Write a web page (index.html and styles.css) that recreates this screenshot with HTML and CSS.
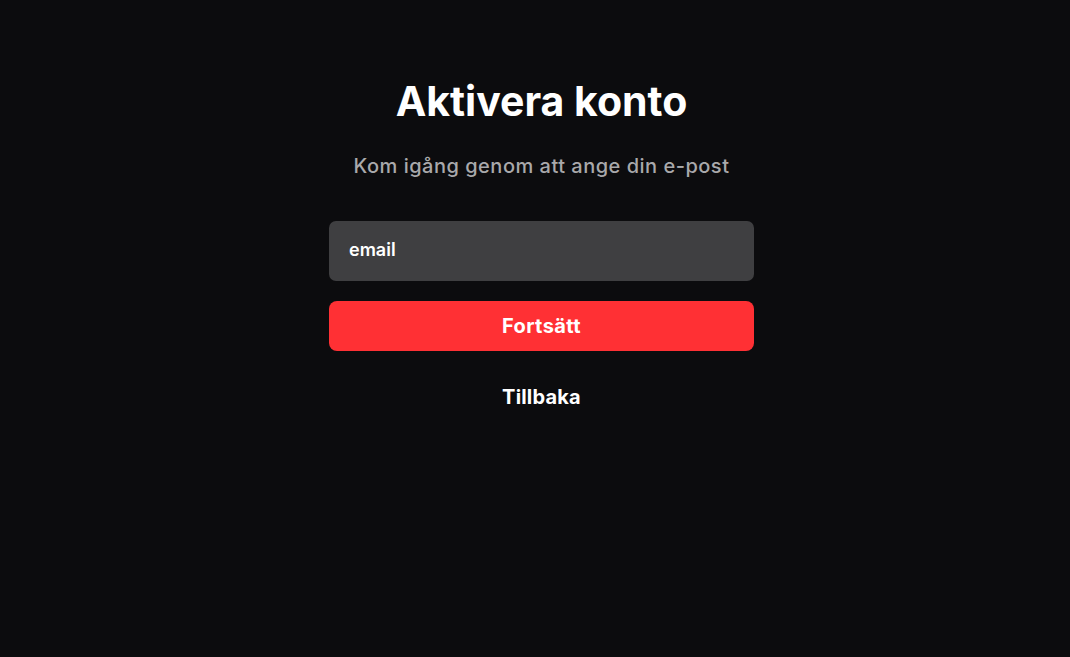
FILE: index.html
```html
<!DOCTYPE html>
<html lang="sv">
<head>
	<meta charset="utf-8" />
	<title>Aktivera konto</title>
	<link rel="stylesheet" href="styles.css">
</head>
<body>
	<section class="page">
		<div class="activate">
			<h1 class="title">Aktivera konto</h1>
			<p class="subtitle">Kom igång genom att ange din e-post</p>
			<form class="activateForm">
				<input class="emailField" type="email" placeholder="email">
				<button class="continueButton" type="button">Fortsätt</button>
			</form>
			<a class="backLink" href="#">Tillbaka</a>
		</div>
	</section>
</body>
</html>
```

FILE: styles.css
```css
body{
	margin: 0;
	padding: 0;
	background: #0c0c0e;
	font-family: Inter, "Liberation Sans", sans-serif;
	color: #fff;
}

.page{
	display: flex;
	justify-content: center;
	padding: 74px 0 0 13px;
	min-height: 583px;
}

.activate{
	width: 425px;
	display: flex;
	flex-direction: column;
	align-items: center;
}

.title{
	margin: 0;
	font-size: 41px;
	line-height: 54px;
	font-weight: 700;
}

.subtitle{
	margin: 24px 0 0 0;
	font-size: 20px;
	line-height: 28px;
	font-weight: 500;
	letter-spacing: 0.5px;
	color: #a9a9ab;
}

.activateForm{
	width: 100%;
	margin-top: 41px;
	display: flex;
	flex-direction: column;
	gap: 20px;
}

.emailField{
	height: 60px;
	box-sizing: border-box;
	border: none;
	border-radius: 7px;
	background: #3f3f41;
	padding: 0 20px 3px 20px;
	font: 600 18px Inter, "Liberation Sans", sans-serif;
	color: #fff;
	outline: none;
}

.emailField::placeholder{
	color: #fff;
	opacity: 1;
}

.continueButton{
	height: 50px;
	border: none;
	border-radius: 8px;
	background: #ff3034;
	color: #fff;
	font: 700 20px Inter, "Liberation Sans", sans-serif;
	letter-spacing: 0.4px;
}

.backLink{
	margin-top: 32px;
	font-size: 20px;
	line-height: 28px;
	font-weight: 700;
	letter-spacing: 0.2px;
	color: #fff;
	text-decoration: none;
}
```
